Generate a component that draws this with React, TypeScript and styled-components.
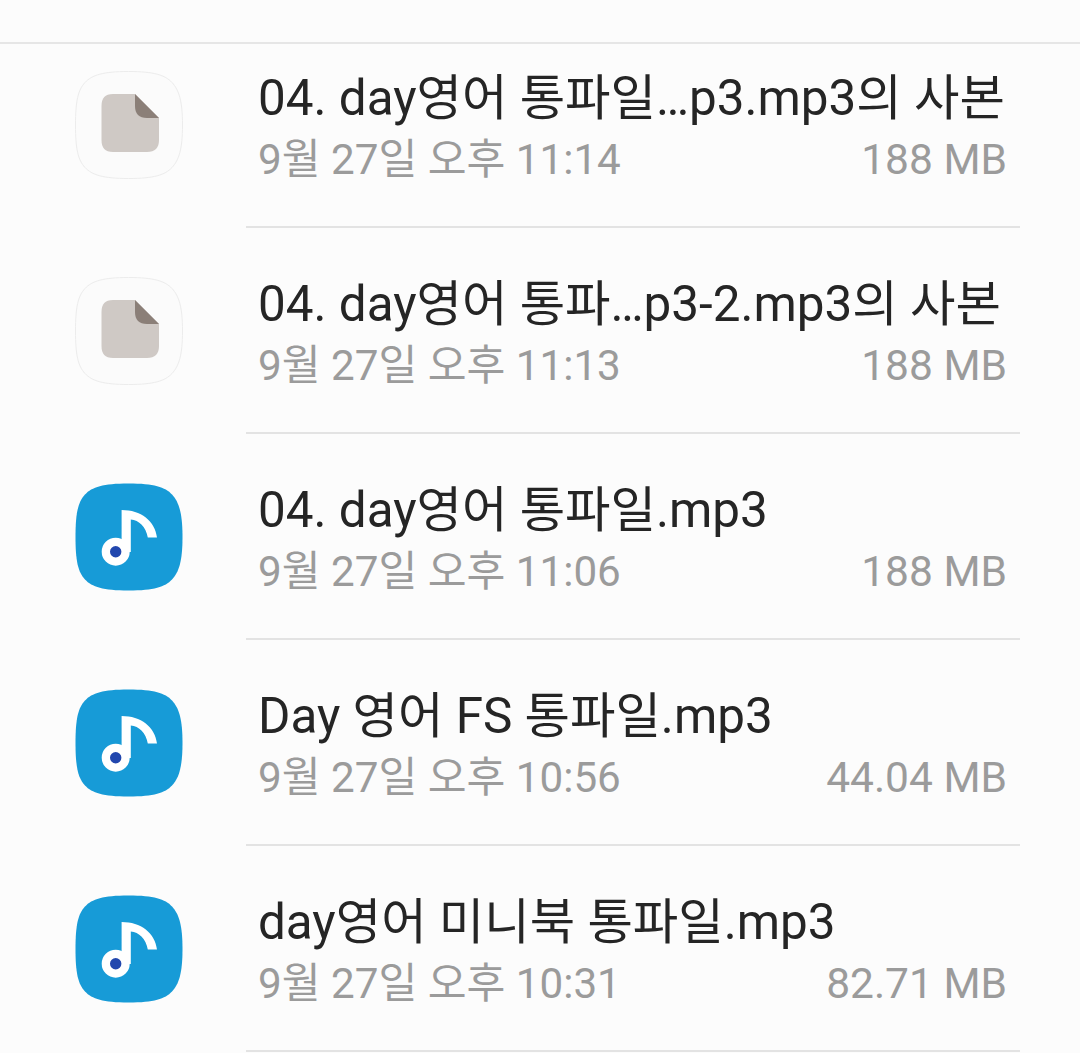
import React from 'react';
import styled, { createGlobalStyle } from 'styled-components';

const GlobalStyle = createGlobalStyle`
  html, body {
    margin: 0;
    padding: 0;
    background: #fcfcfc;
    overflow: hidden;
  }
`;

const Page = styled.div`
  width: 1080px;
  height: 1053px;
  overflow: hidden;
  background: #fcfcfc;
  font-family: Roboto, 'Noto Sans CJK KR', sans-serif;
`;

const TopBar = styled.div`
  height: 44px;
  border-bottom: 2px solid #e6e6e6;
  box-sizing: border-box;
`;

// the first row is scrolled partly under the top bar
const FileList = styled.div`
  margin-top: -22px;
`;

const FileRow = styled.div`
  display: flex;
  height: 206px;
`;

const IconSlot = styled.div`
  width: 246px;
  flex: none;
  padding: 49px 0 0 75px;
  box-sizing: border-box;
`;

const Body = styled.div`
  flex: 1;
  margin-right: 60px;
  padding: 44px 13px 0 12px;
  box-sizing: border-box;
  border-bottom: 2px solid #e3e3e3;
`;

const Title = styled.div`
  font-size: 49.4px;
  line-height: 65px;
  color: #252525;
  white-space: nowrap;
`;

const Meta = styled.div`
  display: flex;
  justify-content: space-between;
  font-size: 42.2px;
  line-height: 58px;
  color: #9b9b9b;
  white-space: nowrap;
`;

const Size = styled.span`
  font-size: 42.5px;
`;

const SQUIRCLE =
  'M53.5 0.5C79 0.5 90 4 97 11.5C104 19 107.5 30 107.5 54C107.5 78 104 89 97 96.5C90 104 79 107.5 53.5 107.5C28 107.5 17 104 10 96.5C3 89 0.5 78 0.5 54C0.5 30 3 19 10 11.5C17 4 28 0.5 53.5 0.5Z';

const DocIcon = () => (
  <svg width="108" height="108" viewBox="0 0 108 108">
    <path d={SQUIRCLE} fill="#fbfbfb" stroke="#ececec" strokeWidth="1" />
    <path
      d="M38 23H60L84 47V69C84 77 80 81 72 81H38C30 81 26.5 77 26.5 69V35C26.5 27 30 23 38 23Z"
      fill="#cfc9c5"
    />
    <path d="M60 23L84 47H72C64 47 60 43 60 35Z" fill="#8b7f78" />
  </svg>
);

const MusicIcon = () => (
  <svg width="108" height="108" viewBox="0 0 108 108">
    <path d={SQUIRCLE} fill="#179bd7" />
    <path d="M46.6 69V27C66 27 80 38 82 54.5H72.8C71 44 64 37 55.8 36.5V69Z" fill="#fff" />
    <circle cx="40.7" cy="68.7" r="9.85" fill="#2247ae" stroke="#fff" strokeWidth="8.3" />
  </svg>
);

const files = [
  { kind: 'doc', name: '04. day영어 통파일…p3.mp3의 사본', date: '9월 27일 오후 11:14', size: '188 MB' },
  { kind: 'doc', name: '04. day영어 통파…p3-2.mp3의 사본', date: '9월 27일 오후 11:13', size: '188 MB' },
  { kind: 'music', name: '04. day영어 통파일.mp3', date: '9월 27일 오후 11:06', size: '188 MB' },
  { kind: 'music', name: 'Day 영어 FS 통파일.mp3', date: '9월 27일 오후 10:56', size: '44.04 MB' },
  { kind: 'music', name: 'day영어 미니북 통파일.mp3', date: '9월 27일 오후 10:31', size: '82.71 MB' },
];

const App: React.FC = () => (
  <Page>
    <GlobalStyle />
    <TopBar />
    <FileList>
      {files.map((file, index) => (
        <FileRow key={index}>
          <IconSlot>{file.kind === 'doc' ? <DocIcon /> : <MusicIcon />}</IconSlot>
          <Body>
            <Title>{file.name}</Title>
            <Meta>
              <span>{file.date}</span>
              <Size>{file.size}</Size>
            </Meta>
          </Body>
        </FileRow>
      ))}
    </FileList>
  </Page>
);

export default App;
